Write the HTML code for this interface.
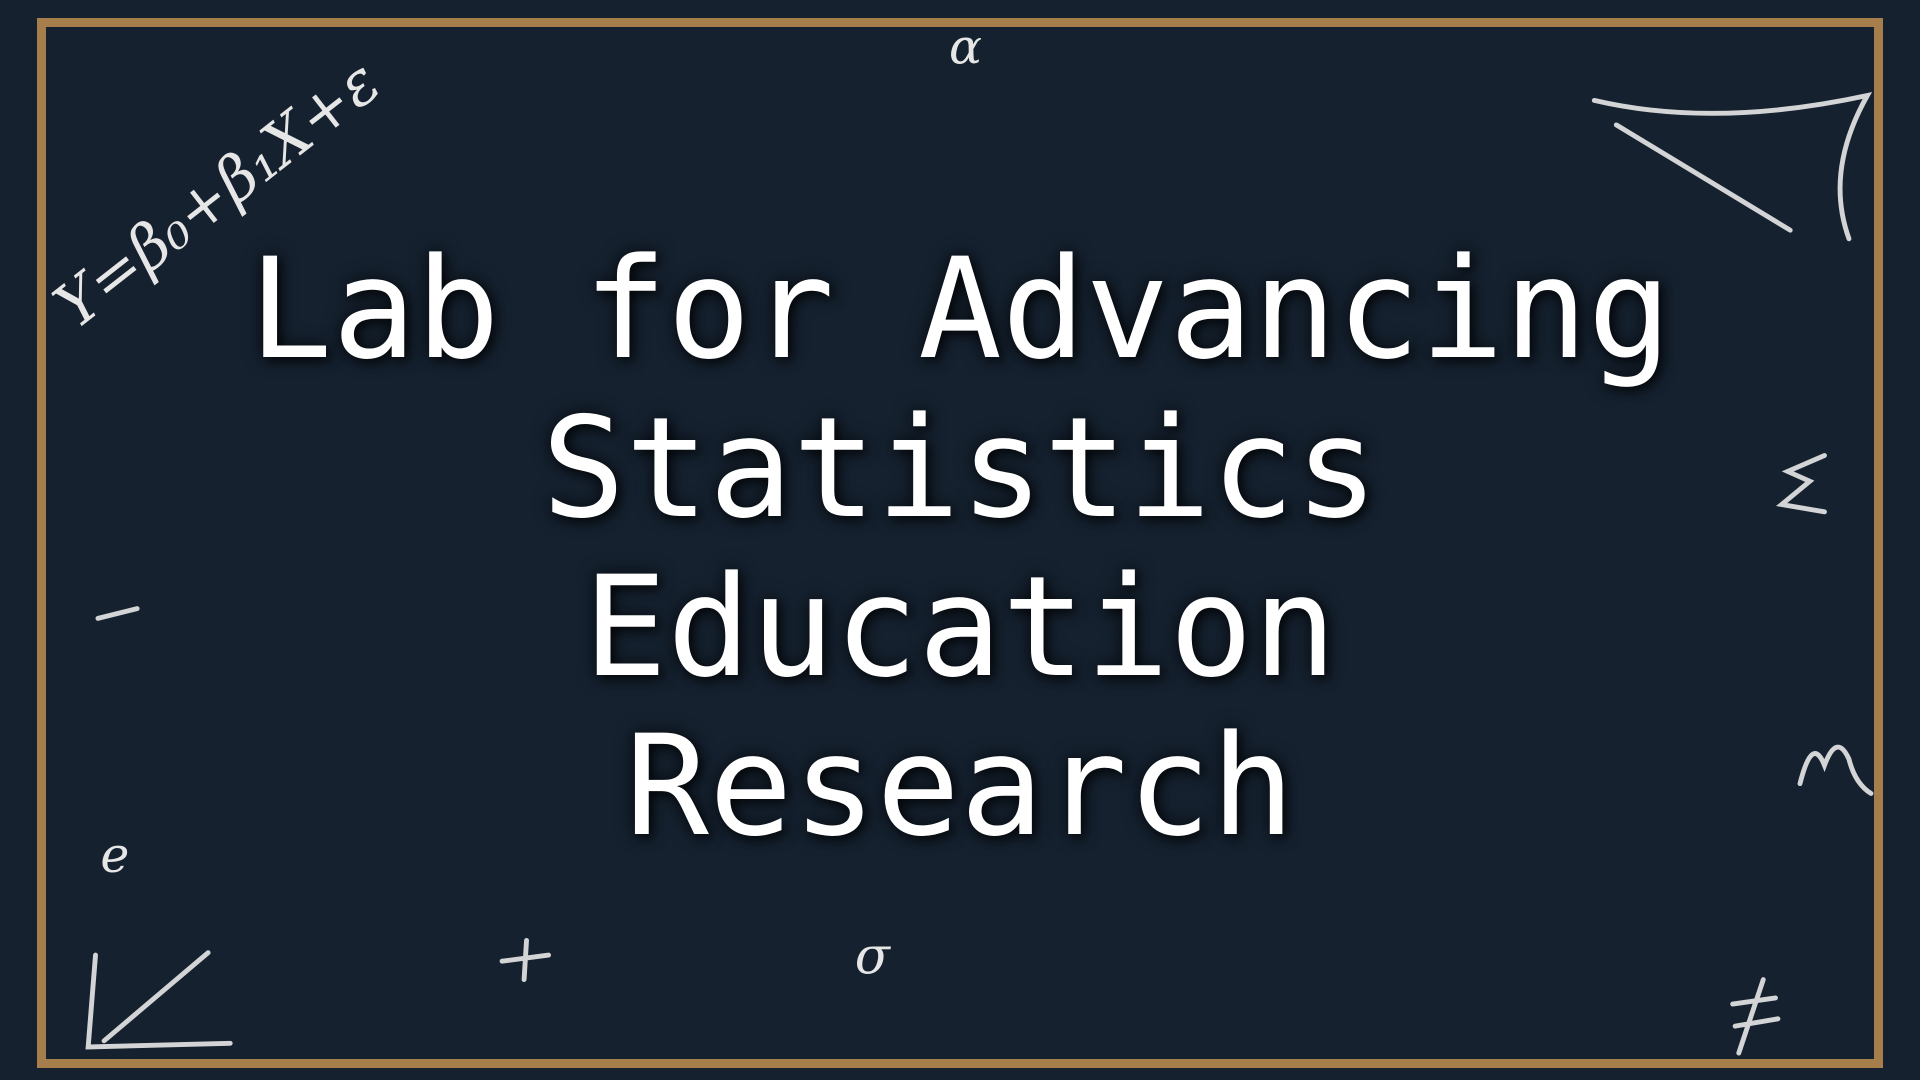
<!DOCTYPE html>
<html><head><meta charset="utf-8"><style>
html,body{margin:0;padding:0;width:1920px;height:1080px;overflow:hidden;background:#15212f;}
.frame{position:absolute;left:37px;top:18px;width:1846px;height:1050px;box-sizing:border-box;border:9px solid #a67e4c;}
svg{position:absolute;left:0;top:0;}
.t{position:absolute;left:0;width:1920px;top:230px;text-align:center;font-family:"DejaVu Sans Mono","Liberation Mono",monospace;font-size:139px;line-height:159px;color:#fff;text-shadow:0 0 18px rgba(0,0,0,.7),4px 4px 10px rgba(0,0,0,.6);white-space:pre;}
.c{font-family:"DejaVu Serif","Liberation Serif",serif;fill:#e6e6e6;font-style:italic;}
</style></head><body>
<svg width="1920" height="1080" viewBox="0 0 1568 882">
<g stroke="#e8e8e8" stroke-width="4" fill="none" stroke-linecap="round" opacity=".9">
<path d="M1302 82 Q1400 105 1525 78 Q1490 140 1510 195"/>
<path d="M1320 102 L1462 188"/>
<path d="M78 780 L72 855 L188 852"/>
<path d="M85 850 L170 778"/>
<path d="M80 505 L112 497"/>
<path d="M410 785 L448 780 M430 768 L428 800"/>
<path d="M1415 820 L1450 815 M1417 838 L1452 832 M1440 800 L1420 860"/>
<path d="M1470 640 Q1480 600 1490 625 Q1500 598 1510 620 Q1515 640 1528 648"/>
<path d="M1490 372 L1460 385 L1478 393 L1455 412 L1490 418"/>
</g>
<text class="c" x="62" y="270" font-size="50" transform="rotate(-38 62 270)">Y=β₀+β₁X+ε</text>
<text class="c" x="775" y="52" font-size="40">α</text>
<text class="c" x="82" y="712" font-size="40">e</text>
<text class="c" x="698" y="795" font-size="42">σ</text>
</svg>
<div class="frame"></div>
<div class="t">Lab for Advancing
Statistics
Education
Research</div>
</body></html>
